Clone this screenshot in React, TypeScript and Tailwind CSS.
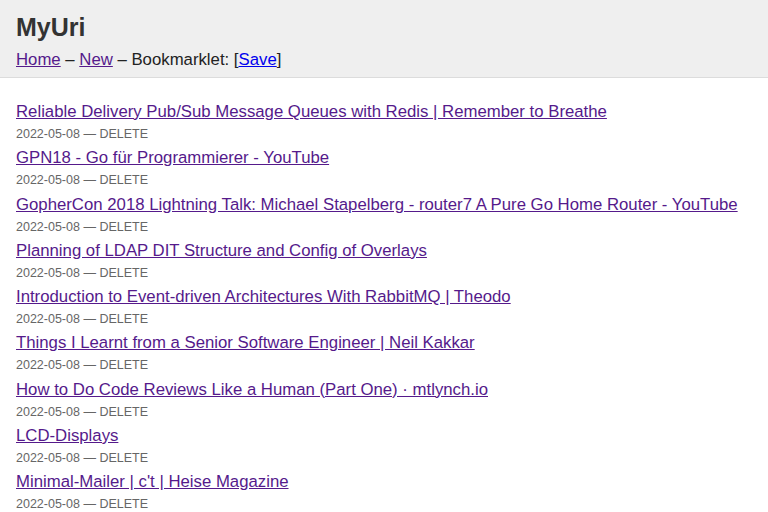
import React from "react";

const App = () => {
  const items = [
    "Reliable Delivery Pub/Sub Message Queues with Redis | Remember to Breathe",
    "GPN18 - Go für Programmierer - YouTube",
    "GopherCon 2018 Lightning Talk: Michael Stapelberg - router7 A Pure Go Home Router - YouTube",
    "Planning of LDAP DIT Structure and Config of Overlays",
    "Introduction to Event-driven Architectures With RabbitMQ | Theodo",
    "Things I Learnt from a Senior Software Engineer | Neil Kakkar",
    "How to Do Code Reviews Like a Human (Part One) · mtlynch.io",
    "LCD-Displays",
    "Minimal-Mailer | c't | Heise Magazine",
  ];

  return (
    <div className="min-h-screen bg-white font-['Liberation_Sans',Arial,sans-serif] text-[#222]">
      {/* header */}
      <div className="bg-[#efefef] border-b border-[#dcdcdc] px-4 pt-[9px] pb-[5px]">
        <h1 className="text-[25px] leading-9 font-bold text-[#333]">MyUri</h1>
        <div className="text-[16.75px] leading-6 mt-[3px]">
          <a href="#" className="underline text-[#551a8b]">Home</a> – <a href="#" className="underline text-[#551a8b]">New</a> – Bookmarklet: [<a href="#" className="underline text-[#0000ee]">Save</a>]
        </div>
      </div>

      {/* items */}
      <div className="px-4 pt-[23px]">
        {items.map((title) => (
          <div className="mb-[5.25px]" key={title}>
            <div className="leading-[22px] text-[16.75px]">
              <a href="#" className="underline text-[#551a8b]">{title}</a>
            </div>
            <div className="mt-[3px] text-[12.5px] leading-4 text-[#666]">
              2022-05-08 — <span className="uppercase">Delete</span>
            </div>
          </div>
        ))}
      </div>
    </div>
  );
};

export default App;
